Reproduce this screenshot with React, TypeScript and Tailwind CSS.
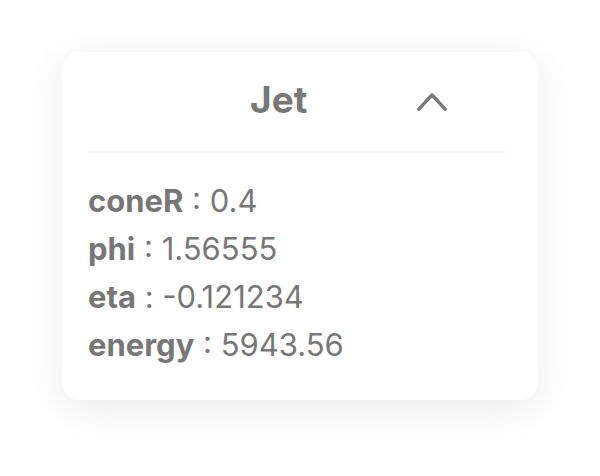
import React from 'react';

const fields = [
  { key: 'coneR', value: '0.4' },
  { key: 'phi', value: '1.56555' },
  { key: 'eta', value: '-0.121234' },
  { key: 'energy', value: '5943.56' },
];

export default function App() {
  return (
    <div className="min-h-screen bg-white pt-[52px] pl-[62px]" style={{ fontFamily: 'Inter, "Noto Sans", sans-serif' }}>
      <div className="w-[476px] rounded-[18px] bg-white pl-[26px] pr-[33px] pt-[28px] pb-[31px] text-[#777777] shadow-[0_8px_40px_rgba(0,0,0,0.09)]">
        {/* Header */}
        <div className="flex items-center h-[40px]">
          <h2 className="ml-[162px] text-[37px] leading-[40px] font-bold">Jet</h2>
          <button className="ml-auto mr-[58px] flex items-center justify-center mt-[2px]">
            <svg width="30" height="19" viewBox="0 0 30 19" fill="none">
              <polyline points="1.8,17.2 15,3 28.2,17.2" stroke="#777777" strokeWidth="3.4" strokeLinecap="round" strokeLinejoin="round" />
            </svg>
          </button>
        </div>
        <div className="mt-[31px] h-[2px] bg-[#eeeeee]" />

        {/* Fields */}
        <div className="mt-[24px]">
          {fields.map((f, i) => (
            <div key={i} className="text-[31px] leading-[48px]">
              <span className="font-bold">{f.key}</span> : {f.value}
            </div>
          ))}
        </div>
      </div>
    </div>
  );
}
